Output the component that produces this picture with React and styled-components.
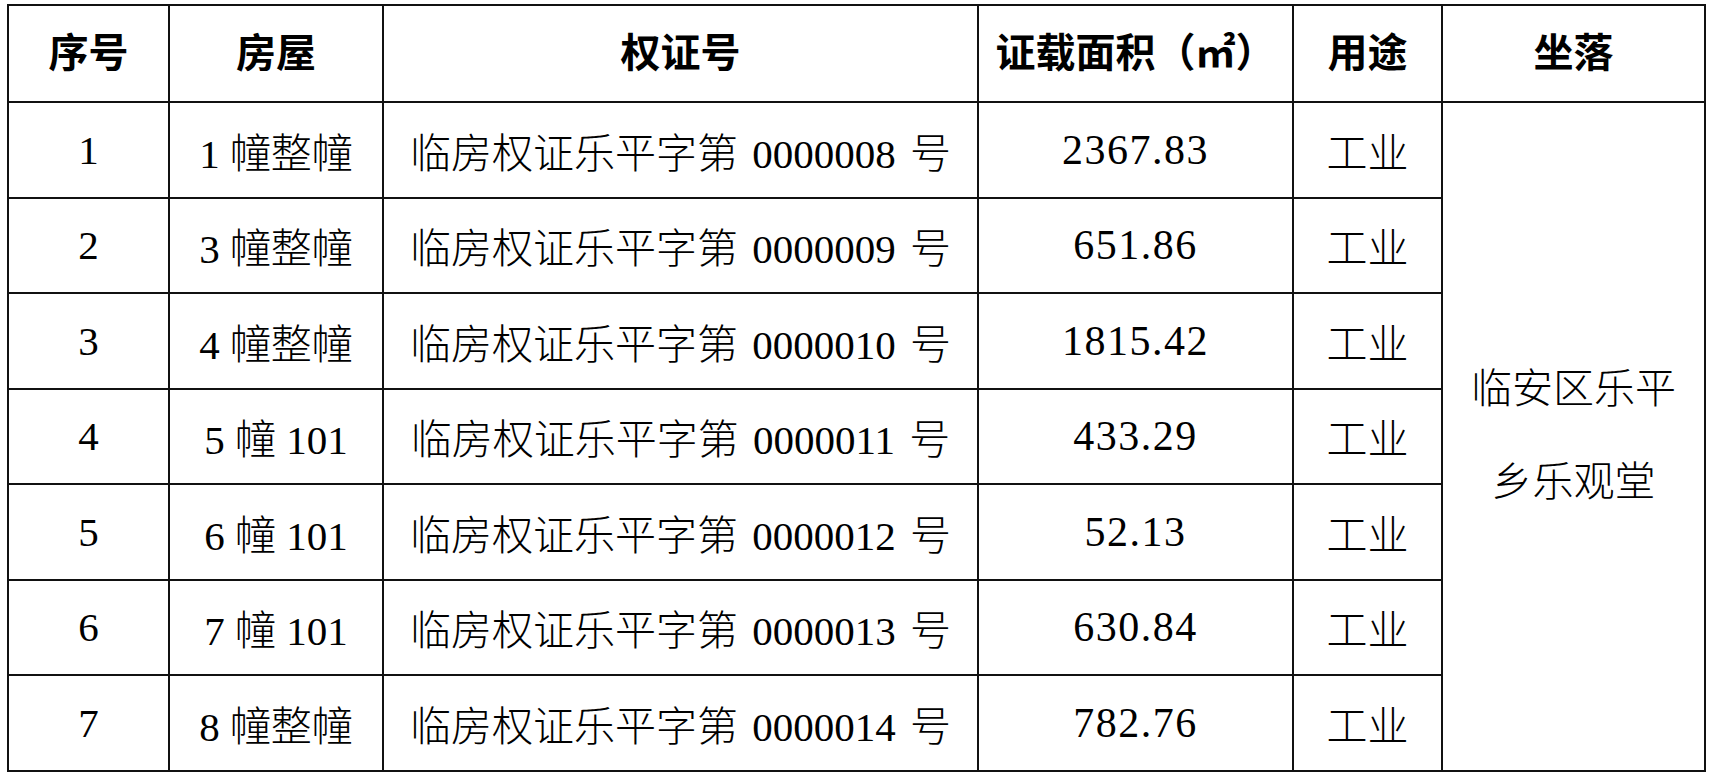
import styled, { createGlobalStyle } from "styled-components";

const GlobalStyle = createGlobalStyle`
  html, body {
    margin: 0;
    padding: 0;
    background: #ffffff;
  }
  body {
    font-family: "Liberation Serif", "Noto Sans CJK SC", serif;
    color: #000;
  }
`;

const Page = styled.div`
  padding: 4px 0 0 7px;
`;

const Table = styled.table`
  width: 1697px;
  table-layout: fixed;
  border-collapse: collapse;
  border: 2px solid #111;
`;

const HeadCell = styled.th`
  height: 87px;
  padding: 0 0 8px;
  border: 2px solid #111;
  font-size: 40px;
  font-weight: 700;
  text-align: center;
  vertical-align: middle;
  white-space: nowrap;
`;

const Cell = styled.td`
  height: 93.5px;
  padding: 0;
  border: 2px solid #111;
  font-size: ${({ $area }) => ($area ? "42px" : "41px")};
  letter-spacing: ${({ $area }) => ($area ? "1.5px" : "0")};
  word-spacing: ${({ $wide }) => ($wide ? "4px" : "0")};
  font-weight: 300;
  text-align: center;
  vertical-align: middle;
  white-space: nowrap;
`;

const PlaceCell = styled.td`
  padding: 0 24px;
  border: 2px solid #111;
  font-size: 41px;
  font-weight: 300;
  line-height: 93px;
  text-align: center;
  vertical-align: middle;
`;

const columns = [
  { key: "no", title: "序号", width: 161 },
  { key: "house", title: "房屋", width: 214 },
  { key: "cert", title: "权证号", width: 595 },
  { key: "area", title: "证载面积（㎡）", width: 315 },
  { key: "use", title: "用途", width: 149 },
  { key: "place", title: "坐落", width: 263 },
];

const rows = [
  { no: "1", house: "1 幢整幢", cert: "0000008", area: "2367.83" },
  { no: "2", house: "3 幢整幢", cert: "0000009", area: "651.86" },
  { no: "3", house: "4 幢整幢", cert: "0000010", area: "1815.42" },
  { no: "4", house: "5 幢 101", cert: "0000011", area: "433.29" },
  { no: "5", house: "6 幢 101", cert: "0000012", area: "52.13" },
  { no: "6", house: "7 幢 101", cert: "0000013", area: "630.84" },
  { no: "7", house: "8 幢整幢", cert: "0000014", area: "782.76" },
];

export default function App() {
  return (
    <Page>
      <GlobalStyle />
      <Table>
        <colgroup>
          {columns.map((c) => (
            <col key={c.key} style={{ width: c.width }} />
          ))}
        </colgroup>
        <thead>
          <tr>
            {columns.map((c) => (
              <HeadCell key={c.key}>{c.title}</HeadCell>
            ))}
          </tr>
        </thead>
        <tbody>
          {rows.map((r, i) => (
            <tr key={r.no}>
              <Cell>{r.no}</Cell>
              <Cell>{r.house}</Cell>
              <Cell $wide>临房权证乐平字第 {r.cert} 号</Cell>
              <Cell $area>{r.area}</Cell>
              <Cell>工业</Cell>
              {i === 0 && (
                <PlaceCell rowSpan={rows.length}>临安区乐平乡乐观堂</PlaceCell>
              )}
            </tr>
          ))}
        </tbody>
      </Table>
    </Page>
  );
}
